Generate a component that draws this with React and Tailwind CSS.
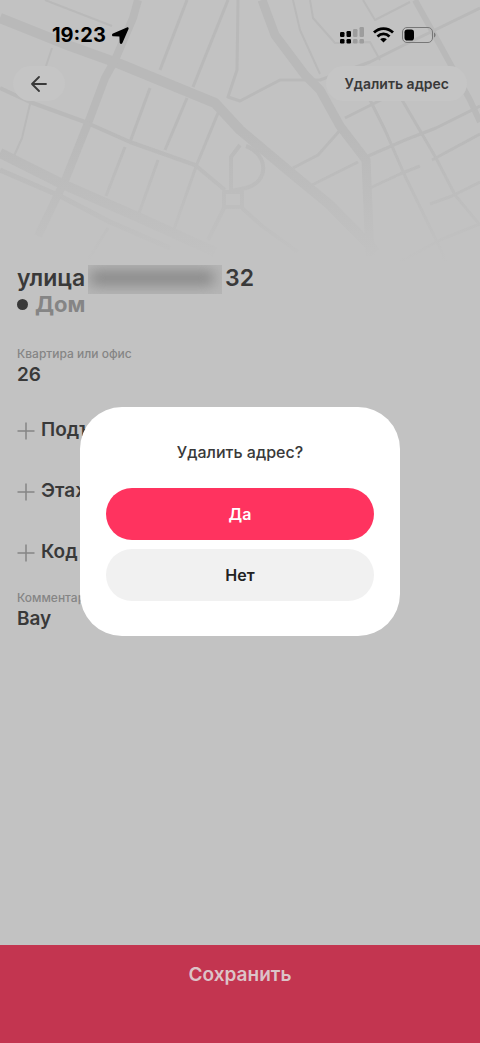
import { useState } from 'react'

const roads = [
  { w: 10, d: 'M0 18 L70 46 L120 64 L215 103 L240 130 L290 172 L330 205 L376 252' },
  { w: 8, d: 'M138 0 L133 18 L115 60 L105 78 L90 118 L66 178 L38 236' },
  { w: 10, d: 'M0 153 L60 183 L140 218 L215 252' },
  { w: 5, d: 'M0 170 L60 196 L110 222 L170 248' },
  { w: 4, d: 'M0 88 L30 102 L85 122 L130 142 L195 165 L225 190' },
  { w: 9, d: 'M262 0 L275 35 L305 75 L320 90 L340 126 L366 160 L370 256' },
  { w: 6, d: 'M415 0 L440 45 L470 100 L480 122' },
  { w: 2, d: 'M45 0 L112 26' },
  { w: 3, d: 'M187 0 L160 70 M150 88 L130 142' },
  { w: 3, d: 'M228 0 L193 87 M187 98 L165 150' },
  { w: 3, d: 'M238 0 L237 70 L228 97 L240 101 L280 80 L320 80 L370 62 L402 46 L480 8' },
  { w: 2, d: 'M52 48 L46 66 M30 104 L22 138 L14 156' },
  { w: 3, d: 'M218 113 L197 164 L173 232 M125 147 L106 196 M158 160 L138 216 M108 228 L88 260' },
  { w: 2, d: 'M293 0 L300 30 L320 74 M310 0 L313 18 L335 43 L370 42 L380 60' },
  { w: 2, d: 'M363 0 L375 20 L410 2' },
  { w: 3, d: 'M366 92 L385 130 L405 176 L440 248 L446 262 M395 88 L415 122 L436 158 L455 195 L480 225' },
  { w: 3, d: 'M293 168 L318 155 L342 128 M366 157 L405 140 L436 128 L480 106' },
  { w: 3, d: 'M345 118 L385 98 L420 84 M310 186 L358 162 M370 188 L400 174 L420 166' },
  { w: 3, d: 'M432 160 L480 134 M430 204 L452 196 L480 182 M400 262 L440 240 L480 224' },
  { w: 4, d: 'M240 145 L231 157 L231 190 M246 146 C268 154 270 182 246 188 L231 191' },
  { w: 4, d: 'M224 192 h18 v15 h-18 z M242 208 L262 226 L298 252 M224 208 L208 240' },
]

function MapBackdrop() {
  return (
    <div className="absolute inset-x-0 top-0 h-[264px]" aria-hidden="true">
      <svg viewBox="0 0 480 264" preserveAspectRatio="xMidYMin slice" className="h-full w-full">
        <g fill="none" stroke="#b9b9b9" strokeLinejoin="round">
          {roads.map(r => <path key={r.d} d={r.d} strokeWidth={r.w} />)}
        </g>
      </svg>
      <div className="absolute inset-0 bg-linear-to-b from-transparent from-50% to-[#c2c2c2]" />
    </div>
  )
}

function StatusBar() {
  return (
    <div className="flex h-[66px] items-center justify-between pl-[52px] pr-11 pt-1 text-black">
      <div className="flex items-center gap-1.5">
        <span className="text-xl font-bold">19:23</span>
        <svg width="17" height="17" viewBox="0 0 17 17" fill="currentColor" aria-hidden="true">
          <path d="M14.900.500 1 6.500c-1.500.7-1.200 2.600.4 2.700l6 .3.300 6c.1 1.600 2 1.900 2.700.4L16.500 2.100c.5-1.100-.5-2.100-1.600-1.600Z" />
        </svg>
      </div>
      <div className="flex items-center gap-2">
        <svg width="26" height="17" viewBox="0 0 26 17" aria-hidden="true">
          <g fill="#000">
            <rect x="1" y="5" width="4.500" height="5" rx="1.200" />
            <rect x="7.500" y="4" width="4.500" height="6" rx="1.200" />
            <rect x="1" y="12" width="4.500" height="4.500" rx="1.200" />
            <rect x="7.500" y="12" width="4.500" height="4.500" rx="1.200" />
          </g>
          <g fill="#9d9d9d">
            <rect x="14" y="2" width="4.500" height="8" rx="1.200" />
            <rect x="20.500" y="0" width="4.500" height="10" rx="1.200" />
            <rect x="14" y="12" width="4.500" height="4.500" rx="1.200" />
            <rect x="20.500" y="12" width="4.500" height="4.500" rx="1.200" />
          </g>
        </svg>
        <svg width="21" height="16" viewBox="0 0 21 16" fill="none" stroke="#000" strokeWidth="2.800" aria-hidden="true">
          <path d="M1 5.600c5.400-5.300 13.600-5.300 19 0" />
          <path d="M4.500 9.400c3.500-3.400 8.500-3.400 12 0" />
          <path d="M10.500 15.500 7.200 12.300c1.800-1.700 4.800-1.700 6.600 0Z" fill="#000" stroke="none" />
        </svg>
        <svg width="34" height="16" viewBox="0 0 34 16" aria-hidden="true">
          <rect x=".5" y=".5" width="30" height="15" rx="4.500" fill="none" stroke="#777" />
          <rect x="2.500" y="2.500" width="9.500" height="11" rx="2.800" fill="#000" />
          <path d="M32 5.500c2 .7 2 4.300 0 5Z" fill="#777" />
        </svg>
      </div>
    </div>
  )
}

function Field({ id, label, value, onChange }) {
  return (
    <div className="flex h-[61px] flex-col pt-1.5">
      <label htmlFor={id} className="text-xs leading-[18px] font-medium text-[#858585]">{label}</label>
      <input
        id={id}
        value={value}
        onChange={e => onChange(e.target.value)}
        className="h-6 w-full bg-transparent text-[19px] leading-6 font-semibold outline-none"
      />
    </div>
  )
}

function AddRow({ label }) {
  return (
    <button type="button" className="flex h-[61px] w-full items-center gap-1.5 text-left text-[19px] font-semibold">
      <svg width="18" height="18" viewBox="0 0 18 18" stroke="#858585" strokeWidth="1.500" aria-hidden="true">
        <path d="M9 .5v17M.5 9h17" />
      </svg>
      {label}
    </button>
  )
}

// street name is hidden behind a smudge
function HiddenStreet() {
  return (
    <span className="relative h-[29px] w-[134px] shrink-0 overflow-hidden bg-[#b6b6b6]">
      <span className="absolute top-1.5 left-0.5 h-3.5 w-[124px] rounded-sm bg-[#848484] blur-[7px]" />
    </span>
  )
}

function ConfirmDialog() {
  return (
    <div className="fixed inset-0 flex items-center justify-center px-20">
      <div
        role="dialog"
        aria-modal="true"
        aria-labelledby="confirm-title"
        className="w-full max-w-sm rounded-[42px] bg-white px-[26px] pt-[33px] pb-[35px] text-center"
      >
        <h2 id="confirm-title" className="text-base leading-6 font-medium">Удалить адрес?</h2>
        <div className="mt-6 flex flex-col gap-[9px]">
          <button type="button" className="h-[52px] rounded-full bg-[#ff335f] text-base font-semibold text-white">Да</button>
          <button type="button" className="h-[52px] rounded-full bg-[#f1f1f1] text-base font-semibold text-[#222]">Нет</button>
        </div>
      </div>
    </div>
  )
}

export default function App() {
  const [flat, setFlat] = useState('26')
  const [comment, setComment] = useState('Вау')

  return (
    <div className="relative flex min-h-screen flex-col bg-[#c2c2c2] font-['Inter',sans-serif] text-[#393939]">
      <MapBackdrop />

      <header className="relative">
        <StatusBar />
        <div className="flex items-center justify-between px-[13px]">
          <button type="button" aria-label="Назад" className="flex h-[35px] w-[52px] items-center justify-center rounded-full bg-[#c5c5c5]">
            <svg width="16" height="16" viewBox="0 0 16 16" fill="none" stroke="currentColor" strokeWidth="1.800" strokeLinecap="round" strokeLinejoin="round" aria-hidden="true">
              <path d="M15 8H1M8 1 1 8l7 7" />
            </svg>
          </button>
          <button type="button" className="h-[35px] rounded-full bg-[#c5c5c5] px-[18px] text-sm font-semibold">Удалить адрес</button>
        </div>
      </header>

      <main className="relative mt-[164px] flex-1 px-[17px]">
        <h1 className="text-[23px] leading-[26px] font-semibold">
          <span className="flex h-[26px] items-start gap-[3px]">
            улица <HiddenStreet /> 32
          </span>
          <span className="flex items-center gap-[7px] text-[22px] font-bold text-[#858585]">
            <span className="size-[11px] rounded-full bg-[#393939]" />
            Дом
          </span>
        </h1>

        <form className="mt-[22px]">
          <Field id="flat" label="Квартира или офис" value={flat} onChange={setFlat} />
          <AddRow label="Подъезд" />
          <AddRow label="Этаж" />
          <AddRow label="Код" />
          <Field id="comment" label="Комментарий" value={comment} onChange={setComment} />
        </form>
      </main>

      <button type="button" className="relative flex h-[98px] justify-center bg-[#c33550] pt-[18px] text-[19px] leading-6 font-semibold text-[#dcc3c8]">
        Сохранить
      </button>

      <ConfirmDialog />
    </div>
  )
}
